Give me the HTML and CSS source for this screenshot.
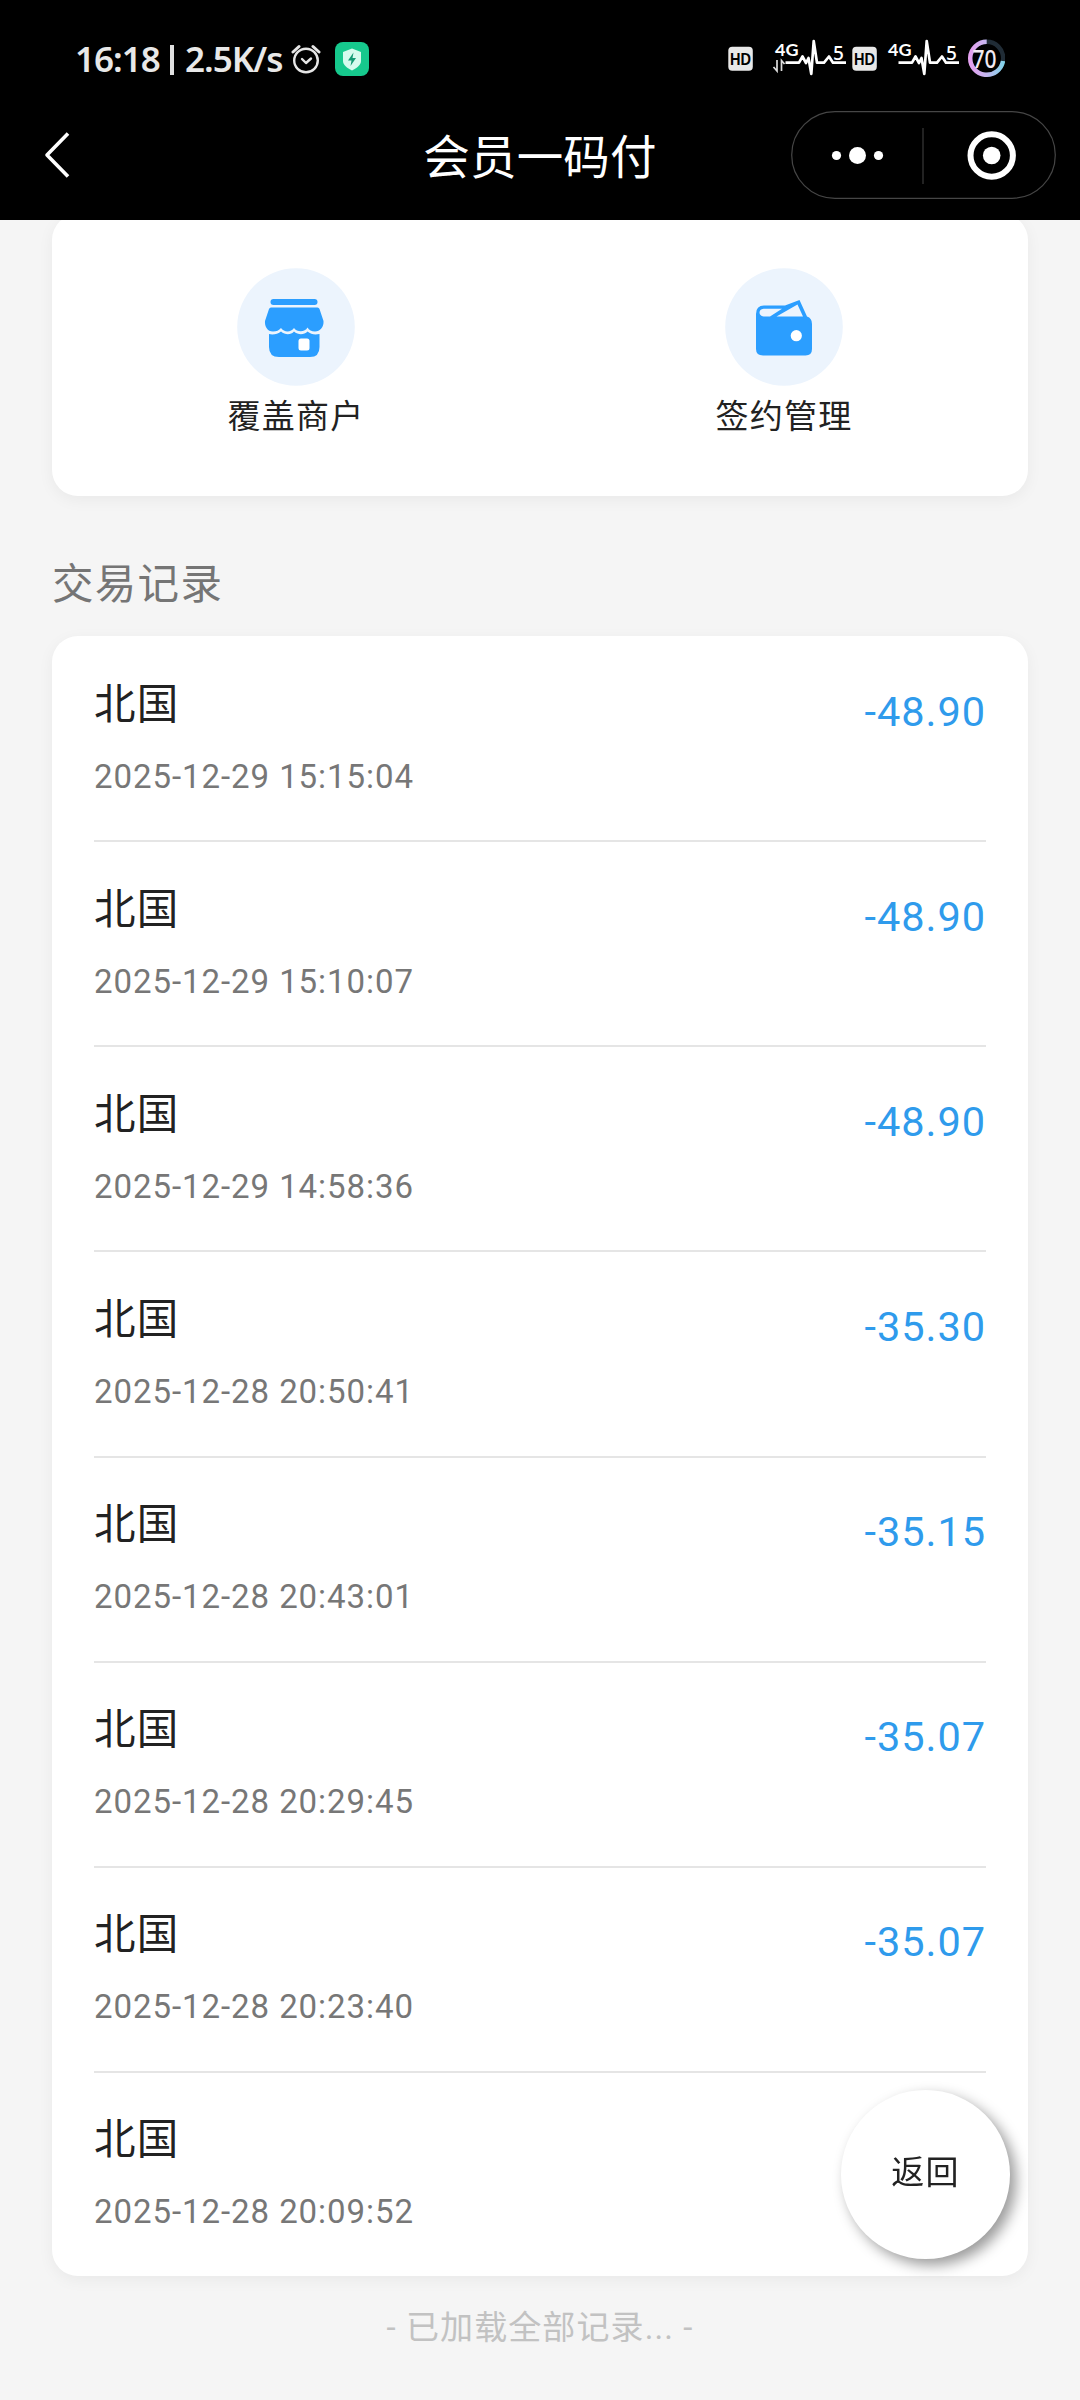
FILE: index.html
```html
<!DOCTYPE html>
<html lang="zh-CN">
<head>
<meta charset="utf-8">
<title>会员一码付</title>
<link rel="stylesheet" href="styles.css">
</head>
<body>
<header class="top">
  <div class="status">
    <span class="clock">16:18</span><span class="bar"></span><span class="speed">2.5K/s</span>
    <svg class="alarm" width="30" height="30" viewBox="0 0 30 30" fill="none" stroke="#e6e6e6" stroke-linecap="round">
      <circle cx="15" cy="16.5" r="11.8" stroke-width="2.4"/>
      <path d="M11 15l4 4 5-4.500" stroke-width="2.400" stroke-linejoin="round"/>
      <path d="M2 8l6-5.500M28 8l-6-5.500" stroke-width="3"/>
    </svg>
    <svg class="guard" width="34" height="34" viewBox="0 0 34 34">
      <rect width="34" height="34" rx="8" fill="#16c98d"/>
      <path d="M17 6.500L26 10v9c0 4-4 7-9 9.500C12 26 8 23 8 19v-9z" fill="#d6fbee"/>
      <path d="M18.500 10.500L13 18.500h3.500L15.500 24l5.500-8h-3.500z" fill="#149a74"/>
    </svg>
    <svg class="signals" width="290" height="50" viewBox="715 33 290 50">
      <defs>
        <linearGradient id="ring" x1="0" x2="1"><stop offset="0" stop-color="#e5a0ef"/><stop offset=".5" stop-color="#c4b6ef"/><stop offset="1" stop-color="#84d3ea"/></linearGradient>
        <g id="sim">
          <rect x="728.300" y="46.700" width="24.500" height="24" rx="4" fill="#e8e8e8"/>
          <text class="hd" x="740.500" y="64.800" text-anchor="middle" textLength="21" lengthAdjust="spacingAndGlyphs">HD</text>
        </g>
        <g id="wave">
          <path d="M785.500 62.700H799L802.500 56.500 806 63 808.500 58 811.300 74 813.700 41 817 62.700H824L829 56.500 833 62.700H846" fill="none" stroke="#fff" stroke-width="2.700" stroke-linejoin="round"/>
          <text class="net" x="775" y="56" textLength="23.500" lengthAdjust="spacingAndGlyphs">4G</text>
          <text class="five" x="833" y="59.800">5</text>
        </g>
      </defs>
      <use href="#sim"/><use href="#sim" x="124"/>
      <use href="#wave"/><use href="#wave" x="113"/>
      <path d="M777 60v11l-3.500-4M781.500 71V60.500l3 3.500" fill="none" stroke="#ddd" stroke-width="1.700"/>
      <circle cx="986.700" cy="58.300" r="16.500" fill="none" stroke="#202c36" stroke-width="4.400"/>
      <path d="M986.700 41.800A16.500 16.500 0 1 0 1003 61" fill="none" stroke="url(#ring)" stroke-width="4.400"/>
      <text class="level" x="972.500" y="67.500" textLength="24" lengthAdjust="spacingAndGlyphs">70</text>
    </svg>
  </div>
  <div class="nav">
    <svg class="back" width="30" height="50" viewBox="0 0 30 50" fill="none" stroke="#fff" stroke-width="3.600" stroke-linejoin="round"><path d="M25 3.500L4 25l21 21.500"/></svg>
    <h1 class="title">会员一码付</h1>
    <div class="capsule">
      <svg width="265" height="88" viewBox="0 0 265 88">
        <rect x=".700" y=".700" width="263.600" height="86.600" rx="43.300" fill="none" stroke="#464646" stroke-width="1.200"/>
        <path d="M132 17v56" stroke="#3a3a3a" stroke-width="1.200"/>
        <g fill="#fff"><circle cx="45.500" cy="44.500" r="4.600"/><circle cx="66.500" cy="44.500" r="8.500"/><circle cx="87.500" cy="44.500" r="4.600"/><circle cx="200.700" cy="44.500" r="8.800"/></g>
        <circle cx="200.700" cy="44.500" r="21.200" fill="none" stroke="#fff" stroke-width="6"/>
      </svg>
    </div>
  </div>
</header>
<main class="page">
  <section class="card actions">
    <a class="action">
      <svg width="118" height="118" viewBox="0 0 118 118">
        <circle cx="59" cy="59" r="58.800" fill="#ecf4fd"/>
        <g fill="#2b9eff">
          <rect x="33.500" y="31" width="47" height="6" rx="3"/>
          <path d="M34 39.500H80.500Q82 39.500 82.500 41L86.500 53C87 59 83 63.500 78 63.500 74.500 63.500 72 62 70.500 59.500 68 64.500 60 64.500 57 60 54 64.500 47 64.500 44 60 42 62.500 39.500 63.500 36 63.500 30.500 63.500 27.500 58.500 28 53L32 41Q32.500 39.500 34 39.500z"/>
          <path d="M32 66C36 67 41 66 44 63.500 48 67 54 67 57 63.500 61 67 67 67 70.500 63.500 74 66.500 78 67 82.500 66V79Q82.500 89 73 89H42Q32 89 32 79z"/>
        </g>
        <rect x="61.500" y="70.500" width="11" height="12" rx="2.500" fill="#fff"/>
      </svg>
      <span>覆盖商户</span>
    </a>
    <a class="action">
      <svg width="118" height="118" viewBox="0 0 118 118">
        <circle cx="59" cy="59" r="58.800" fill="#ecf4fd"/>
        <path d="M31 46Q31 37.500 39 37.500H60L74.500 32 82 48.500Q87 50 87 56V81Q87 87.500 80.500 87.500H38Q31 87.500 31 81z" fill="#2b9eff"/>
        <path d="M38.500 40.700H57L45 48.500H38.500Q34.500 47.500 34.500 44.500T38.500 40.700zM72.500 36.500L78 48.500H51.500z" fill="#ecf4fd"/>
        <circle cx="71.300" cy="67.700" r="5.600" fill="#fff"/>
      </svg>
      <span>签约管理</span>
    </a>
  </section>
  <h2 class="heading">交易记录</h2>
  <section class="card records">
    <div class="row"><div class="info"><div class="name">北国</div><div class="time">2025-12-29 15:15:04</div></div><div class="amount">-48.90</div></div>
    <div class="row"><div class="info"><div class="name">北国</div><div class="time">2025-12-29 15:10:07</div></div><div class="amount">-48.90</div></div>
    <div class="row"><div class="info"><div class="name">北国</div><div class="time">2025-12-29 14:58:36</div></div><div class="amount">-48.90</div></div>
    <div class="row"><div class="info"><div class="name">北国</div><div class="time">2025-12-28 20:50:41</div></div><div class="amount">-35.30</div></div>
    <div class="row"><div class="info"><div class="name">北国</div><div class="time">2025-12-28 20:43:01</div></div><div class="amount">-35.15</div></div>
    <div class="row"><div class="info"><div class="name">北国</div><div class="time">2025-12-28 20:29:45</div></div><div class="amount">-35.07</div></div>
    <div class="row"><div class="info"><div class="name">北国</div><div class="time">2025-12-28 20:23:40</div></div><div class="amount">-35.07</div></div>
    <div class="row"><div class="info"><div class="name">北国</div><div class="time">2025-12-28 20:09:52</div></div></div>
  </section>
  <p class="end">- 已加载全部记录... -</p>
</main>
<button class="fab">返回</button>
</body>
</html>
```
FILE: styles.css
```css
* { box-sizing: border-box; }
body {
  margin: 0;
  height: 2400px;
  overflow: hidden;
  background: #f5f5f5;
  color: #222;
  font-family: Roboto, "Noto Sans CJK SC", sans-serif;
  letter-spacing: 1.2px;
}
h1, h2, p { margin: 0; font-weight: 400; }
svg { display: block; flex: none; }
.top {
  position: relative;
  z-index: 2;
  height: 220px;
  padding-top: 33px;
  background: #000;
}
.status {
  display: flex;
  align-items: center;
  height: 53px;
  padding: 0 75px 3px;
  color: #e8e8e8;
  font: 600 35px/50px "Noto Sans", sans-serif;
  letter-spacing: 0;
}
.clock { width: 95px; padding-top: 2px; letter-spacing: -1px; }
.bar { width: 4px; height: 30px; margin-top: 3px; background: #e0e0e0; }
.speed { width: 117px; padding: 2px 0 0 11px; letter-spacing: -1px; white-space: nowrap; }
.alarm { margin-top: 1px; }
.guard { margin: 1px 0 0 14px; }
.signals { margin-left: auto; }
.hd { font: 700 16.5px "Liberation Sans", sans-serif; fill: #000; }
.net { font: 700 17px Lato, sans-serif; fill: #fff; }
.five { font: 500 19px "Noto Sans", sans-serif; fill: #fff; }
.level { font: 500 24.5px "Noto Sans", sans-serif; fill: #f2eaf2; }
.nav {
  display: grid;
  grid-template-columns: 289px 1fr 289px;
  align-items: center;
  height: 88px;
  margin-top: 25px;
}
.back { margin-left: 43px; }
.title {
  padding-top: 6px;
  color: #fff;
  text-align: center;
  font-size: 46.5px;
  letter-spacing: .2px;
  line-height: 82px;
}
.capsule { width: 265px; }
.page { padding: 0 52px; }
.card { border-radius: 26px; background: #fff; box-shadow: 0 4px 16px rgba(0, 0, 0, .05); }
.actions {
  display: grid;
  grid-template-columns: 1fr 1fr;
  height: 282px;
  margin-top: -6px;
  padding-top: 54px;
}
.action {
  display: flex;
  flex-direction: column;
  align-items: center;
  font-size: 33px;
  line-height: 48px;
  gap: 7px;
}
.heading { margin: 64px 0 26px; color: #757575; font-size: 41.5px; letter-spacing: 1.3px; line-height: 50px; }
.records { height: 1640px; padding: 1px 42px 0; }
.row {
  display: flex;
  justify-content: space-between;
  height: 205.14px;
  border-bottom: 2px solid #e5e5e5;
}
.row:last-child { border: 0; }
.name { padding-top: 37.500px; font-size: 41.5px; line-height: 60px; }
.time { margin-top: 22px; color: #777; font-size: 33px; letter-spacing: .94px; line-height: 40px; }
.amount { padding-top: 49.5px; color: #2f9bec; font-size: 41.5px; letter-spacing: .95px; line-height: 50px; }
.end { margin-top: 28px; color: #c2c2c2; font-size: 33px; letter-spacing: 1.1px; line-height: 48px; text-align: center; }
.fab {
  position: fixed;
  z-index: 3;
  left: 841px;
  top: 2090px;
  width: 169px;
  height: 169px;
  padding: 0 0 4px;
  border: 0;
  border-radius: 50%;
  background: #fff;
  box-shadow: 6px 6px 14px rgba(0, 0, 0, .4);
  color: #222;
  font: 33px/48px Roboto, "Noto Sans CJK SC", sans-serif;
  letter-spacing: 1.2px;
}
```
